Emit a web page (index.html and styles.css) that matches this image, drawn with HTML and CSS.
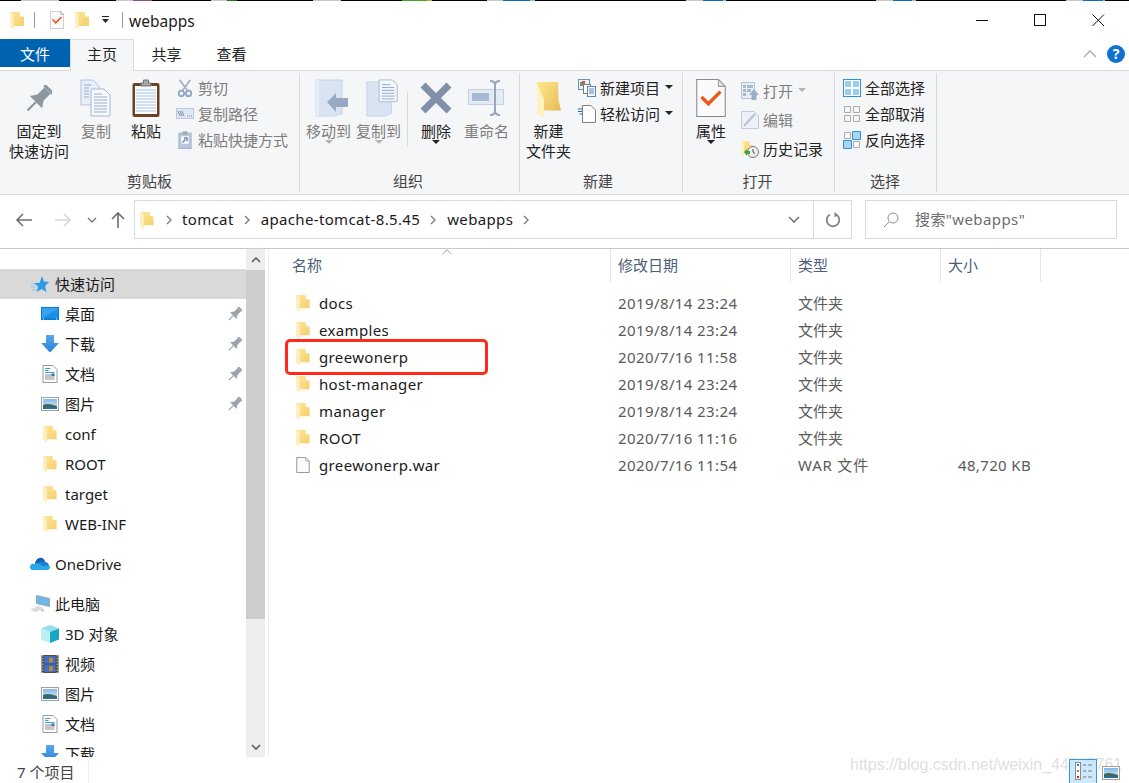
FILE: index.html
```html
<!DOCTYPE html>
<html lang="zh-CN">
<head>
<meta charset="utf-8">
<title>webapps</title>
<link rel="stylesheet" href="styles.css">
</head>
<body>
<svg class="defs" aria-hidden="true">
  <defs>
    <linearGradient id="fbody" x1="0" y1="0" x2="1" y2="1"><stop offset="0" stop-color="#ffe796"/><stop offset="1" stop-color="#f3cd6c"/></linearGradient>
    <linearGradient id="fbig" x1="0" y1="0" x2="1" y2="1"><stop offset="0" stop-color="#ffe88f"/><stop offset="1" stop-color="#e4b650"/></linearGradient>
    <linearGradient id="sky" x1="0" y1="0" x2="0" y2="1"><stop offset="0" stop-color="#7fb8e8"/><stop offset="1" stop-color="#e6f1fa"/></linearGradient>
    <linearGradient id="bluebar" x1="0" y1="0" x2="0" y2="1"><stop offset="0" stop-color="#56a8ee"/><stop offset="1" stop-color="#2a80d8"/></linearGradient>
    <symbol id="folder" viewBox="0 0 14 17">
      <path fill="url(#fbody)" d="M0 0H9.800L10 4.200L14 4.800V14H3.500V17L0 15Z"/>
      <path fill="#fff0c4" d="M0 0.300L3.500 2V17L0 15Z"/>
    </symbol>
    <symbol id="bigfolder" viewBox="0 0 24 35">
      <path fill="url(#fbig)" d="M0 0H21L21.500 18L24 28.500H7V35L0 31Z"/>
      <path fill="#fff0c0" d="M0 2L7 17V35L0 31Z"/>
    </symbol>
    <symbol id="pin" viewBox="0 0 24 24">
      <g transform="rotate(45 12 12)" fill="currentColor">
        <rect x="6.500" y="-2" width="11" height="3"/>
        <rect x="8" y="1" width="8" height="10"/>
        <path d="M8 10H16L20 16H4Z"/>
        <rect x="11" y="16" width="2" height="11"/>
      </g>
    </symbol>
    <symbol id="docs" viewBox="0 0 32 38">
      <path fill="#e8eff8" stroke="#b4c5dd" d="M1 1H13L19 7V26H1Z"/>
      <path fill="#f6f9fd" stroke="#a6b9d4" d="M11 10H24L30 16V37H11Z"/>
      <path stroke="#98add0" d="M4 6H11M4 9H9M4 12H9M4 15H9M4 18H9M14 15H22M14 18H27M14 21H27M14 24H27M14 27H27M14 30H27M14 33H27" fill="none"/>
    </symbol>
    <symbol id="clipboard" viewBox="0 0 28 38">
      <rect x="0.500" y="4" width="27" height="34" rx="2" fill="#6b4222"/>
      <rect x="3" y="7" width="22" height="28" fill="#fbfcfe"/>
      <path stroke="#a7c4e6" d="M4 11H24M4 14H24M4 17H24M4 20H24M4 23H24M4 26H24M4 29H24M4 32H24" fill="none"/>
      <path fill="#a8a8a8" stroke="#707070" d="M9 7V4H11.500V1H16.500V4H19V7Z"/>
    </symbol>
    <symbol id="scissors" viewBox="0 0 16 20">
      <path stroke="#a9b4c4" stroke-width="2" fill="none" d="M2 1L11 13M14 1L5 13"/>
      <circle cx="4" cy="16" r="3" fill="none" stroke="#93a5bf" stroke-width="2"/>
      <circle cx="12" cy="16" r="3" fill="none" stroke="#93a5bf" stroke-width="2"/>
    </symbol>
    <symbol id="copypath" viewBox="0 0 18 12">
      <rect x="0.500" y="0.500" width="17" height="10" fill="#dfe7f2" stroke="#bccadf"/>
      <path stroke="#7f8ea5" fill="none" d="M2 3L4 8M4 3L6 8M6 3L8 8M11 8H12M13 8H14M15 8H16"/>
    </symbol>
    <symbol id="shortcut" viewBox="0 0 16 22">
      <rect x="0.500" y="2.500" width="15" height="19" fill="#b9c6db" stroke="#9badc8"/>
      <rect x="5" y="0.500" width="6" height="4" fill="#a0a8b4"/>
      <rect x="3.500" y="6.500" width="9" height="9" fill="#fff"/>
      <path d="M5 14L8.500 10.500M6.500 8.500H10.500V12.500" stroke="#6c86ad" stroke-width="1.800" fill="none"/>
    </symbol>
    <symbol id="moveto" viewBox="0 0 34 38">
      <path fill="#d9e4f2" stroke="#c6d4e8" d="M1 1H27V35L20 37H1Z"/>
      <path fill="#e6edf7" d="M1 1H4V37H1Z"/>
      <path fill="#98a9c6" d="M12 23L21 14V19H33V28H21V33Z"/>
    </symbol>
    <symbol id="copyto" viewBox="0 0 34 40">
      <path fill="#d9e4f2" stroke="#c6d4e8" d="M1 3H27V36L20 39H1Z"/>
      <path fill="#f3f7fc" stroke="#a6b9d4" d="M14 1H28L33 6V24H14Z"/>
      <path stroke="#8fa5c6" d="M17 6H26M17 9H30M17 12H30M17 15H30M17 18H30M17 21H30" fill="none"/>
    </symbol>
    <symbol id="x" viewBox="0 0 32 32">
      <path d="M3 3L29 29M29 3L3 29" stroke="#8290aa" stroke-width="7" fill="none"/>
    </symbol>
    <symbol id="rename" viewBox="0 0 37 36">
      <rect x="0.500" y="9.500" width="35" height="15" fill="#e3ebf5" stroke="#c3d0e2"/>
      <rect x="4" y="13" width="17" height="8" fill="#a9bad4"/>
      <path d="M22 1C26 1 27 3 27 5V31C27 33 26 35 22 35M32 1C28 1 27 3 27 5M32 35C28 35 27 33 27 31" stroke="#98a6bd" stroke-width="2" fill="none"/>
    </symbol>
    <symbol id="newitem" viewBox="0 0 18 18">
      <rect x="0.500" y="0.500" width="11" height="10" fill="#eaf0f8" stroke="#6f8fb5"/>
      <rect x="2" y="3" width="4" height="4" fill="#6e9d5a"/><rect x="4" y="2" width="3" height="3" fill="#c9584a"/>
      <rect x="5.500" y="5.500" width="7" height="9" fill="#fff" stroke="#7c7c7c"/>
      <rect x="9.500" y="7.500" width="8" height="10" fill="#f7fbff" stroke="#5a87bb"/>
      <path d="M11 10H16M11 12H16M11 14H16" stroke="#5a87bb" fill="none"/>
    </symbol>
    <symbol id="easy" viewBox="0 0 18 18">
      <path fill="#fff" stroke="#808080" d="M4.500 0.500H13L17.500 5V17.500H4.500Z"/>
      <path stroke="#1f6fc4" fill="none" d="M0 4H4M0 6.500H4M1.500 9H4"/>
    </symbol>
    <symbol id="checkdoc" viewBox="0 0 28 36">
      <path fill="#fbfbfb" stroke="#8a8a8a" d="M0.500 0.500H21L27.500 7V35.500H0.500Z"/>
      <path fill="#e8e8e8" stroke="#9c9c9c" d="M21 0.500V7H27.500Z"/>
      <path fill="none" stroke="#f0561d" stroke-width="3.200" d="M5 17L11.500 23.500L23 12"/>
    </symbol>
    <symbol id="open" viewBox="0 0 18 18">
      <rect x="0.500" y="0.500" width="13" height="16" fill="#e8eef6" stroke="#b4c2d6"/>
      <path fill="#a8b8cf" d="M2 3H5V6H2ZM6 3H12V6H6ZM2 7H5V10H2ZM2 11H5V14H2ZM6 7H10V10H6Z"/>
      <path fill="#9cafc9" d="M13 7L18 13H15.500V18H10.500V13H8Z"/>
    </symbol>
    <symbol id="edit" viewBox="0 0 18 18">
      <path fill="#eef2f8" stroke="#bccadb" d="M0.500 0.500H13L17.500 5V17.500H0.500Z"/>
      <path d="M3 15L14 3" stroke="#b6c4d8" stroke-width="2.200" fill="none"/>
    </symbol>
    <symbol id="history" viewBox="0 0 18 18">
      <use href="#folder" width="12" height="17"/>
      <circle cx="12" cy="12" r="5.500" fill="#efefef" stroke="#777"/>
      <path d="M12 9V12L14 13.500" stroke="#444" fill="none"/>
      <path d="M3 12L6 9V11H9V14H6V16Z" fill="#3fa43a"/>
    </symbol>
    <symbol id="selall" viewBox="0 0 18 18">
      <rect x="0.500" y="0.500" width="17" height="17" fill="#fff" stroke="#2f8fdc"/>
      <path fill="#99cdf5" d="M2 2H8V8H2ZM10 2H16V8H10ZM2 10H8V16H2ZM10 10H16V16H10Z"/>
    </symbol>
    <symbol id="selnone" viewBox="0 0 18 18">
      <path fill="none" stroke="#ababab" d="M1.500 1.500H7.500V7.500H1.500ZM10.500 1.500H16.500V7.500H10.500ZM1.500 10.500H7.500V16.500H1.500ZM10.500 10.500H16.500V16.500H10.500Z"/>
    </symbol>
    <symbol id="selinv" viewBox="0 0 18 18">
      <path fill="none" stroke="#ababab" d="M1.500 1.500H7.500V7.500H1.500ZM10.500 10.500H16.500V16.500H10.500Z"/>
      <path fill="#a9d5f7" stroke="#2f8fdc" d="M9.500 0.500H17.500V8.500H9.500ZM0.500 9.500H8.500V17.500H0.500Z"/>
    </symbol>
    <symbol id="star" viewBox="0 0 18 18">
      <path fill="#2c9be6" d="M11 1L13 6.500L18 7L14 11L15.500 17L10.500 14L6 17L7 11.500L3 8H8.500Z"/>
      <path stroke="#8cc8f0" fill="none" d="M0 9H4M0 12H5M1 15H6"/>
    </symbol>
    <symbol id="desktop" viewBox="0 0 18 14">
      <rect width="18" height="13" fill="#0a7fd6"/>
      <rect x="1" y="1" width="16" height="10" fill="#35a3f0"/>
      <path d="M1 11L17 2V11Z" fill="#1e8fe6"/>
      <path d="M2 12H3M15 12H16" stroke="#fff" stroke-width="1"/>
    </symbol>
    <symbol id="down" viewBox="0 0 18 18">
      <path fill="url(#bluebar)" d="M5 0H13V8H18L9 17.500L0 8H5Z"/>
    </symbol>
    <symbol id="doc" viewBox="0 0 15 18">
      <path fill="#fff" stroke="#9a9a9a" d="M0.500 0.500H10.500L14.500 4.500V17.500H0.500Z"/>
      <path stroke="#3aa0e0" fill="none" d="M2.500 3.500H8M2.500 5.500H6M2.500 7.500H12"/>
      <path stroke="#8c8c8c" fill="none" d="M2.500 10H12M2.500 12H12M2.500 14H12"/>
      <path fill="#3f76a8" d="M9 8.500H12V11H9Z"/>
    </symbol>
    <symbol id="picture" viewBox="0 0 18 14">
      <rect x="0.500" y="0.500" width="17" height="13" fill="#fff" stroke="#a0a0a0"/>
      <rect x="2" y="2" width="14" height="10" fill="url(#sky)"/>
      <path d="M2 12V8C6 6 10 7 16 9V12Z" fill="#3d6a58"/>
      <path d="M2 12V10.500C7 9.500 11 10 16 11V12Z" fill="#2f6c9e"/>
    </symbol>
    <symbol id="cloud" viewBox="0 0 20 14">
      <path fill="#0f62b6" d="M5 7C5 3 9 0 12 1C14 2 15 3 15 5L8 8Z"/>
      <path fill="#1b82d2" d="M13 5C16 4 19 6 19 9L11 11L8 7C9 5 11 4 13 5Z"/>
      <path fill="#28a8ea" d="M0 10C0 8 2 6 4 7L8 6L12 9L20 9C20 12 19 13 17 13H3C1 13 0 12 0 10Z"/>
    </symbol>
    <symbol id="pc" viewBox="0 0 20 18">
      <path fill="#6cb6ea" stroke="#9aa8b4" d="M6.500 0.500L19.500 3.500V11.500L6.500 8.500Z"/>
      <path fill="#d8dcdf" d="M0 15L8 11L14 13L6 17Z"/>
      <path fill="#c4c8cc" d="M10 15L13 14L15 15L12 17Z"/>
    </symbol>
    <symbol id="cube" viewBox="0 0 18 18">
      <path fill="#8fe0ec" d="M9 0L18 3.500L9 7L0 3.500Z"/>
      <path fill="#bdeef4" d="M0 3.500L9 7V18L0 14.500Z"/>
      <path fill="#18a6c4" d="M18 3.500L9 7V18L18 14.500Z"/>
    </symbol>
    <symbol id="video" viewBox="0 0 18 19">
      <rect width="18" height="19" fill="#4b4b4b"/>
      <path stroke="#d8d8d8" stroke-dasharray="1.500 1.500" fill="none" d="M1.500 0V19M16.500 0V19"/>
      <rect x="3" y="1" width="12" height="8" fill="#3f6fc4"/>
      <rect x="3" y="10" width="12" height="8" fill="#3f6fc4"/>
      <path fill="#c58c2a" d="M8 3H12V8H8ZM8 12H12V17H8Z"/>
    </symbol>
    <symbol id="file" viewBox="0 0 15 18">
      <path fill="#fafbfc" stroke="#8a8a8a" d="M0.500 0.500H10.500L14.500 4.500V17.500H0.500Z"/>
      <path fill="none" stroke="#a8a8a8" d="M10.500 0.500V4.500H14.500"/>
    </symbol>
  </defs>
</svg>

<div class="topline"></div>

<header class="titlebar">
  <svg class="ic-folder"><use href="#folder"/></svg>
  <span class="qsep"></span>
  <svg class="ic-check"><use href="#checkdoc"/></svg>
  <svg class="ic-folder q-folder2"><use href="#folder"/></svg>
  <svg class="q-more" viewBox="0 0 9 8"><path d="M1 0.500H8" stroke="#222" fill="none"/><path d="M1 3H8L4.500 7Z" fill="#222"/></svg>
  <span class="qsep q-sep2"></span>
  <span class="title">webapps</span>
  <div class="winctl">
    <svg class="wbtn" viewBox="0 0 13 13"><path d="M0 6.500H12" stroke="#111" fill="none"/></svg>
    <svg class="wbtn" viewBox="0 0 13 13"><rect x="0.500" y="0.500" width="11" height="11" stroke="#111" fill="none"/></svg>
    <svg class="wbtn" viewBox="0 0 13 13"><path d="M0.500 0.500L12 12M12 0.500L0.500 12" stroke="#111" fill="none"/></svg>
  </div>
</header>

<nav class="tabs">
  <span class="tab tab-file">文件</span>
  <span class="tab tab-active">主页</span>
  <span class="tab tab-share">共享</span>
  <span class="tab tab-view">查看</span>
  <svg class="collapse" viewBox="0 0 14 8"><path d="M1 7L7 1L13 7" stroke="#a9a9a9" stroke-width="1.300" fill="none"/></svg>
  <span class="help">?</span>
</nav>

<section class="ribbon">
  <div class="group g1">
    <div class="gbody">
      <div class="big w60"><svg class="bigicon pin-big"><use href="#pin"/></svg><span>固定到<br>快速访问</span></div>
      <div class="big w54 off"><svg class="bigicon"><use href="#docs"/></svg><span>复制</span></div>
      <div class="big w46"><svg class="bigicon"><use href="#clipboard"/></svg><span>粘贴</span></div>
      <div class="smalls ml7">
        <div class="small off"><svg class="sic"><use href="#scissors"/></svg>剪切</div>
        <div class="small off"><svg class="sic"><use href="#copypath"/></svg>复制路径</div>
        <div class="small off"><svg class="sic"><use href="#shortcut"/></svg>粘贴快捷方式</div>
      </div>
    </div>
    <div class="glabel">剪贴板</div>
  </div>
  <div class="group g2">
    <div class="gbody">
      <div class="big w45 off"><svg class="bigicon shift"><use href="#moveto"/></svg><span>移动到</span><i class="caret"></i></div>
      <div class="big w45 off ml5"><svg class="bigicon shift"><use href="#copyto"/></svg><span>复制到</span><i class="caret"></i></div>
      <span class="vsep"></span>
      <div class="big w46"><svg class="bigicon icon-x"><use href="#x"/></svg><span>删除</span><i class="caret"></i></div>
      <div class="big w45 off ml5"><svg class="bigicon icon-rn"><use href="#rename"/></svg><span>重命名</span></div>
    </div>
    <div class="glabel">组织</div>
  </div>
  <div class="group g3">
    <div class="gbody">
      <div class="big w45"><svg class="bigicon icon-nf"><use href="#bigfolder"/></svg><span>新建<br>文件夹</span></div>
      <div class="smalls ml7">
        <div class="small"><svg class="sic"><use href="#newitem"/></svg>新建项目<i class="caret scaret"></i></div>
        <div class="small"><svg class="sic"><use href="#easy"/></svg>轻松访问<i class="caret scaret"></i></div>
      </div>
    </div>
    <div class="glabel label-new">新建</div>
  </div>
  <div class="group g4">
    <div class="gbody">
      <div class="big w30"><svg class="bigicon"><use href="#checkdoc"/></svg><span>属性</span><i class="caret"></i></div>
      <div class="smalls wide ml15">
        <div class="small off"><svg class="sic"><use href="#open"/></svg>打开<i class="caret scaret"></i></div>
        <div class="small off"><svg class="sic"><use href="#edit"/></svg>编辑</div>
        <div class="small"><svg class="sic"><use href="#history"/></svg>历史记录</div>
      </div>
    </div>
    <div class="glabel">打开</div>
  </div>
  <div class="group g5">
    <div class="gbody">
      <div class="smalls">
        <div class="small"><svg class="sic"><use href="#selall"/></svg>全部选择</div>
        <div class="small"><svg class="sic"><use href="#selnone"/></svg>全部取消</div>
        <div class="small"><svg class="sic"><use href="#selinv"/></svg>反向选择</div>
      </div>
    </div>
    <div class="glabel">选择</div>
  </div>
</section>

<div class="navbar">
  <svg class="nav-ic back" viewBox="0 0 18 14"><path d="M17 7H2M8 1L2 7L8 13" stroke="#6e6e6e" stroke-width="1.600" fill="none"/></svg>
  <svg class="nav-ic fwd" viewBox="0 0 18 14"><path d="M1 7H16M10 1L16 7L10 13" stroke="#d6d6d6" stroke-width="1.600" fill="none"/></svg>
  <svg class="nav-mini" viewBox="0 0 10 6"><path d="M1 1L5 5L9 1" stroke="#777" stroke-width="1.400" fill="none"/></svg>
  <svg class="nav-up" viewBox="0 0 14 18"><path d="M7 17V2M1 8L7 2L13 8" stroke="#6e6e6e" stroke-width="1.600" fill="none"/></svg>
  <div class="addr">
    <svg class="ic-folder addr-folder"><use href="#folder"/></svg>
    <svg class="crumb-sep first" viewBox="0 0 6 10"><path d="M1 1L5 5L1 9" stroke="#777" stroke-width="1.300" fill="none"/></svg>
    <span class="crumb">tomcat</span>
    <svg class="crumb-sep" viewBox="0 0 6 10"><path d="M1 1L5 5L1 9" stroke="#777" stroke-width="1.300" fill="none"/></svg>
    <span class="crumb">apache-tomcat-8.5.45</span>
    <svg class="crumb-sep" viewBox="0 0 6 10"><path d="M1 1L5 5L1 9" stroke="#777" stroke-width="1.300" fill="none"/></svg>
    <span class="crumb">webapps</span>
    <svg class="crumb-sep" viewBox="0 0 6 10"><path d="M1 1L5 5L1 9" stroke="#777" stroke-width="1.300" fill="none"/></svg>
    <svg class="addr-drop" viewBox="0 0 12 7"><path d="M1 1L6 6L11 1" stroke="#777" stroke-width="1.600" fill="none"/></svg>
    <div class="addr-refresh">
      <svg class="refresh" viewBox="0 0 16 16"><path d="M11 2.500A6.300 6.300 0 1 1 5 2.500" stroke="#808080" stroke-width="1.700" fill="none"/><path d="M9.500 0L13 3L9.500 5.500Z" fill="#808080"/></svg>
    </div>
  </div>
  <div class="search">
    <svg class="search-ic" viewBox="0 0 16 16"><circle cx="10" cy="6" r="5" stroke="#8c8c8c" fill="none"/><path d="M6.300 9.700L1 15" stroke="#8c8c8c" fill="none"/></svg>
    <span class="search-text">搜索"webapps"</span>
  </div>
</div>

<main class="main">
  <aside class="side">
    <div class="tree">
      <div class="row l1 current"><svg class="tic"><use href="#star"/></svg>快速访问</div>
      <div class="row l2"><svg class="tic"><use href="#desktop"/></svg>桌面<svg class="rowpin"><use href="#pin"/></svg></div>
      <div class="row l2"><svg class="tic"><use href="#down"/></svg>下载<svg class="rowpin"><use href="#pin"/></svg></div>
      <div class="row l2"><svg class="tic"><use href="#doc"/></svg>文档<svg class="rowpin"><use href="#pin"/></svg></div>
      <div class="row l2"><svg class="tic"><use href="#picture"/></svg>图片<svg class="rowpin"><use href="#pin"/></svg></div>
      <div class="row l2"><svg class="tic tf"><use href="#folder"/></svg>conf</div>
      <div class="row l2"><svg class="tic tf"><use href="#folder"/></svg>ROOT</div>
      <div class="row l2"><svg class="tic tf"><use href="#folder"/></svg>target</div>
      <div class="row l2"><svg class="tic tf"><use href="#folder"/></svg>WEB-INF</div>
      <div class="row l1 gap"><svg class="tic"><use href="#cloud"/></svg>OneDrive</div>
      <div class="row l1 gap"><svg class="tic"><use href="#pc"/></svg>此电脑</div>
      <div class="row l2"><svg class="tic"><use href="#cube"/></svg>3D 对象</div>
      <div class="row l2"><svg class="tic"><use href="#video"/></svg>视频</div>
      <div class="row l2"><svg class="tic"><use href="#picture"/></svg>图片</div>
      <div class="row l2"><svg class="tic"><use href="#doc"/></svg>文档</div>
      <div class="row l2"><svg class="tic"><use href="#down"/></svg>下载</div>
    </div>
    <div class="scroll">
      <div class="sbtn"><svg viewBox="0 0 10 6"><path d="M1 5L5 1L9 5" stroke="#555" stroke-width="1.500" fill="none"/></svg></div>
      <div class="thumb"></div>
      <div class="strack"></div>
      <div class="sbtn"><svg viewBox="0 0 10 6"><path d="M1 1L5 5L9 1" stroke="#555" stroke-width="1.500" fill="none"/></svg></div>
    </div>
  </aside>
  <section class="list">
    <svg class="sortmark" viewBox="0 0 10 6"><path d="M0.500 5L5 0.800L9.500 5" stroke="#9a9a9a" fill="none"/></svg>
    <div class="thead">
      <div class="th th-name">名称</div>
      <div class="th">修改日期</div>
      <div class="th">类型</div>
      <div class="th">大小</div>
    </div>
    <div class="frow"><div class="fname"><svg class="ic-folder"><use href="#folder"/></svg>docs</div><div class="fcell fdate">2019/8/14 23:24</div><div class="fcell">文件夹</div><div class="fsize"></div></div>
    <div class="frow"><div class="fname"><svg class="ic-folder"><use href="#folder"/></svg>examples</div><div class="fcell fdate">2019/8/14 23:24</div><div class="fcell">文件夹</div><div class="fsize"></div></div>
    <div class="frow"><div class="fname"><svg class="ic-folder"><use href="#folder"/></svg>greewonerp</div><div class="fcell fdate">2020/7/16 11:58</div><div class="fcell">文件夹</div><div class="fsize"></div></div>
    <div class="frow"><div class="fname"><svg class="ic-folder"><use href="#folder"/></svg>host-manager</div><div class="fcell fdate">2019/8/14 23:24</div><div class="fcell">文件夹</div><div class="fsize"></div></div>
    <div class="frow"><div class="fname"><svg class="ic-folder"><use href="#folder"/></svg>manager</div><div class="fcell fdate">2019/8/14 23:24</div><div class="fcell">文件夹</div><div class="fsize"></div></div>
    <div class="frow"><div class="fname"><svg class="ic-folder"><use href="#folder"/></svg>ROOT</div><div class="fcell fdate">2020/7/16 11:16</div><div class="fcell">文件夹</div><div class="fsize"></div></div>
    <div class="frow"><div class="fname"><svg class="ic-file"><use href="#file"/></svg>greewonerp.war</div><div class="fcell fdate">2020/7/16 11:54</div><div class="fcell fwar">WAR 文件</div><div class="fsize">48,720 KB</div></div>
    <div class="redbox"></div>
  </section>
</main>

<footer class="status">
  <span class="count">7 个项目</span>
  <span class="status-sep"></span>
  <span class="watermark">https://blog.csdn.net/weixin_44815761</span>
  <div class="views">
    <div class="view view-on">
      <svg viewBox="0 0 24 20"><rect x="4.500" y="1.500" width="5" height="17" fill="#fff" stroke="#8a8a8a"/><rect x="6" y="3" width="2" height="2" fill="#3a78c0"/><rect x="6" y="9" width="2" height="2" fill="#a97a3a"/><rect x="6" y="15" width="2" height="2" fill="#d02020"/><path d="M12 4H15M17 4H21M12 10H15M17 10H21M12 16H15M17 16H21" stroke="#777" fill="none"/></svg>
    </div>
    <svg class="view-large"><use href="#picture"/></svg>
  </div>
</footer>
</body>
</html>
```

FILE: styles.css
```css
* { box-sizing: border-box; }
html, body { margin: 0; height: 783px; overflow: hidden; background: #fff; }
body {
  display: flex;
  flex-direction: column;
  width: 1129px;
  font: 15px/20px "Noto Sans", "Noto Sans CJK SC", sans-serif;
  color: #1a1a1a;
}
svg { display: block; flex: none; }
.defs { position: absolute; width: 0; height: 0; }

.topline {
  height: 1px;
  flex: none;
  background: linear-gradient(90deg,
    #000 0 21px, #c8c8c8 21px 59px, #000 59px 116px, #c8c8c8 116px 133px, #9c4a7e 133px 152px, #000 152px 211px,
    #c8c8c8 211px 227px, #1a7a10 227px 237px, #000 237px 313px, #c8c8c8 313px 341px, #000 341px 402px,
    #3fa820 402px 427px, #d8a040 427px 432px, #000 432px 487px, #c8c8c8 487px 503px, #0a6fc2 503px 530px,
    #9db8d0 530px 535px, #000 535px 686px, #c8c8c8 686px 703px, #0a6fc2 703px 723px, #9db8d0 723px 726px, #000 726px 876px,
    #c8c8c8 876px 893px, #0a6fc2 893px 912px, #9db8d0 912px 916px, #000 916px 1066px,
    #c8c8c8 1066px 1083px, #0a6fc2 1083px 1103px, #9db8d0 1103px 1105px, #000 1105px);
}

.titlebar { height: 38px; flex: none; display: flex; align-items: center; padding-left: 10px; }
.ic-folder { width: 14px; height: 17px; }
.qsep { width: 1px; height: 16px; background: #9a9a9a; margin-left: 10px; }
.ic-check { width: 14px; height: 18px; margin-left: 15px; }
.q-folder2 { margin-left: 11px; }
.q-more { width: 9px; height: 8px; margin-left: 12px; }
.q-sep2 { margin-left: 12px; }
.title { margin: 2px 0 0 6px; font-size: 15.5px; color: #222; }
.winctl { margin-left: auto; display: flex; gap: 45px; padding-right: 24px; align-items: center; }
.wbtn { width: 13px; height: 13px; }

.tabs { height: 32px; flex: none; display: flex; position: relative; border-bottom: 1px solid #dadbdc; align-items: flex-start; }
.tab { height: 28px; line-height: 30px; text-align: center; color: #222; }
.tab-file { width: 70px; background: #0063b1; color: #fff; }
.tab-active { width: 64px; height: 32px; background: #f5f6f7; border: 1px solid #dadbdc; border-bottom: 0; line-height: 29px; }
.tab-share { width: 65px; }
.tab-view { width: 65px; }
.collapse { width: 14px; height: 8px; margin: 11px 0 0 auto; }
.help { width: 18px; height: 18px; margin: 6px 4px 0 10px; border-radius: 50%; background: #0f72d0; color: #fff; font-weight: 700; font-size: 14px; line-height: 18px; text-align: center; }

.ribbon { height: 124px; flex: none; display: flex; background: #f5f6f7; border-bottom: 1px solid #dadbdc; }
.group { display: flex; flex-direction: column; margin: 2px 0 2px; border-right: 1px solid #dadbdc; }
.g1 { width: 300px; }
.g2 { width: 220px; padding-left: 6px; }
.g3 { width: 163px; padding-left: 6px; }
.g4 { width: 152px; padding-left: 13px; }
.g5 { width: 102px; padding-left: 8px; }
.g1 .gbody { padding-left: 9px; }
.gbody { flex: 1; display: flex; padding-top: 2px; min-height: 0; }
.glabel { height: 20px; line-height: 20px; text-align: center; margin-bottom: 1px; color: #444; }
.g2 .glabel { padding-right: 9px; }
.g3 .glabel { padding-right: 12px; }
.g4 .glabel { padding-right: 15px; }
.g5 .glabel { padding-right: 9px; }

.big { display: flex; flex-direction: column; align-items: center; padding-top: 3px; text-align: center; color: #222; }
.big > span { margin-top: 3px; white-space: nowrap; }
.bigicon { width: 34px; height: 38px; margin-top: 1px; margin-bottom: 1px; }
.w60 { width: 60px; } .w54 { width: 54px; } .w46 { width: 46px; } .w45 { width: 45px; } .w30 { width: 30px; }
.ml5 { margin-left: 5px; } .ml7 { margin-left: 7px; } .ml15 { margin-left: 15px; }
.off { color: #7d7d7d; }
.pin-big { color: #8d979e; width: 26px; height: 28px; margin-top: 7px; margin-bottom: 5px; }
.shift { margin-left: 7px; }
.icon-x { width: 32px; height: 32px; margin-top: 4px; margin-bottom: 4px; }
.icon-rn { width: 37px; height: 36px; margin-top: 2px; margin-bottom: 2px; }
.icon-nf { width: 24px; height: 35px; margin-top: 4px; margin-bottom: 1px; }
.caret { display: block; width: 0; height: 0; margin-top: -1px; border-left: 4.500px solid transparent; border-right: 4.500px solid transparent; border-top: 4px solid #222; }
.off .caret { border-top-color: #b5b5b5; }
.scaret { margin: 0 0 2px 5px; }
.vsep { width: 1px; height: 55px; margin: 17px 5px 0 6px; background: #dadbdc; }
.smalls { display: flex; flex-direction: column; }
.small { height: 26px; display: flex; align-items: center; white-space: nowrap; color: #222; }
.small.off { color: #7d7d7d; }
.sic { width: 18px; height: 18px; margin-right: 4px; }
.wide { padding-top: 1px; }
.wide .small { height: 29px; }

.navbar { height: 54px; flex: none; display: flex; align-items: center; border-bottom: 1px solid #c9c9c9; padding-bottom: 4px; }
.nav-ic { width: 18px; height: 14px; }
.back { margin-left: 15px; }
.fwd { margin-left: 21px; }
.nav-mini { width: 10px; height: 6px; margin-left: 15px; }
.nav-up { width: 14px; height: 18px; margin-left: 14px; }
.addr { width: 718px; height: 39px; margin-left: 9px; border: 1px solid #d9d9d9; display: flex; align-items: center; padding-left: 5px; }
.addr-folder { height: 16px; }
.crumb-sep { width: 6px; height: 10px; margin: 0 11px 0 10px; }
.crumb-sep.first { margin: 0 10px 0 12px; }
.crumb { color: #1a1a1a; letter-spacing: 0.35px; margin-bottom: 2px; }
.addr-drop { width: 12px; height: 7px; margin-left: auto; margin-right: 13px; }
.addr-refresh { width: 38px; height: 100%; border-left: 1px solid #d9d9d9; display: flex; align-items: center; justify-content: center; }
.refresh { width: 16px; height: 16px; }
.search { width: 252px; height: 39px; margin-left: 13px; border: 1px solid #d9d9d9; display: flex; align-items: center; padding-left: 17px; color: #6d6d6d; letter-spacing: 0.4px; }
.search-ic { width: 16px; height: 16px; margin-right: 16px; }
.search-text { margin-bottom: 2px; }

.main { flex: 1; min-height: 0; display: flex; }
.side { width: 269px; flex: none; display: flex; border-right: 1px solid #eee; overflow: hidden; }
.tree { width: 246px; padding-top: 20px; flex: none; overflow: hidden; }
.row { height: 30px; display: flex; align-items: center; color: #1a1a1a; white-space: nowrap; }
.l1 { padding-left: 30px; }
.l1 .tic { width: 20px; height: 18px; margin-right: 5px; }
.l2 { padding-left: 41px; }
.l2 .tic { width: 18px; height: 18px; margin-right: 6px; }
.l2 .tf { width: 14px; height: 16px; margin-left: 2px; margin-right: 8px; }
.current { background: #d9d9d9; }
.gap { margin-top: 10px; }
.rowpin { width: 14px; height: 14px; margin-left: auto; margin-right: 4px; color: #9aa4aa; }
.scroll { width: 19px; flex: none; display: flex; flex-direction: column; background: #eee; }
.sbtn { height: 21px; display: flex; align-items: center; justify-content: center; flex: none; }
.sbtn svg { width: 10px; height: 6px; }
.thumb { height: 349px; flex: none; background: #cdcdcd; }
.strack { flex: 1; }

.list { flex: 1; position: relative; }
.sortmark { position: absolute; left: 173px; top: 0; width: 10px; height: 6px; }
.thead { display: grid; grid-template-columns: 342px 180px 150px 100px; height: 32px; margin-bottom: 8px; }
.th { border-right: 1px solid #e5e5e5; padding-left: 7px; line-height: 33px; color: #4c607a; }
.th-name { padding-left: 23px; }
.frow { display: grid; grid-template-columns: 342px 180px 150px 100px; height: 27px; align-items: center; }
.fname { display: flex; align-items: center; padding-left: 27px; color: #1a1a1a; letter-spacing: 0.35px; }
.fname svg { margin-right: 9px; width: 14px; height: 16px; }
.fcell { padding-left: 7px; color: #5a5a5a; }
.fdate { letter-spacing: 0.4px; }
.fwar { letter-spacing: 0.8px; }
.fsize { text-align: right; padding-right: 10px; color: #5a5a5a; letter-spacing: 0.35px; }
.redbox { position: absolute; left: 16px; top: 90px; width: 203px; height: 36px; border: 3px solid #ff2a1a; border-radius: 5px; }

.status { height: 26px; flex: none; display: flex; position: relative; align-items: flex-start; }
.count { margin-left: 17px; line-height: 30px; color: #444; white-space: nowrap; }
.status-sep { width: 1px; height: 26px; margin-left: 14px; background: #f0f0f0; }
.views { margin-left: auto; display: flex; align-items: flex-start; padding-right: 9px; position: relative; }
.view { width: 28px; height: 26px; margin-top: 2px; background: #cce8ff; border: 1px solid #3a9ad9; border-bottom: 0; }
.view svg { width: 24px; height: 20px; margin: 1px; }
.view-large { width: 18px; height: 14px; margin: 9px 0 0 5px; }
.watermark { position: absolute; left: 850px; top: -1px; font: 16px/18px "Liberation Sans", sans-serif; color: rgba(170, 170, 170, 0.4); white-space: nowrap; }
```
